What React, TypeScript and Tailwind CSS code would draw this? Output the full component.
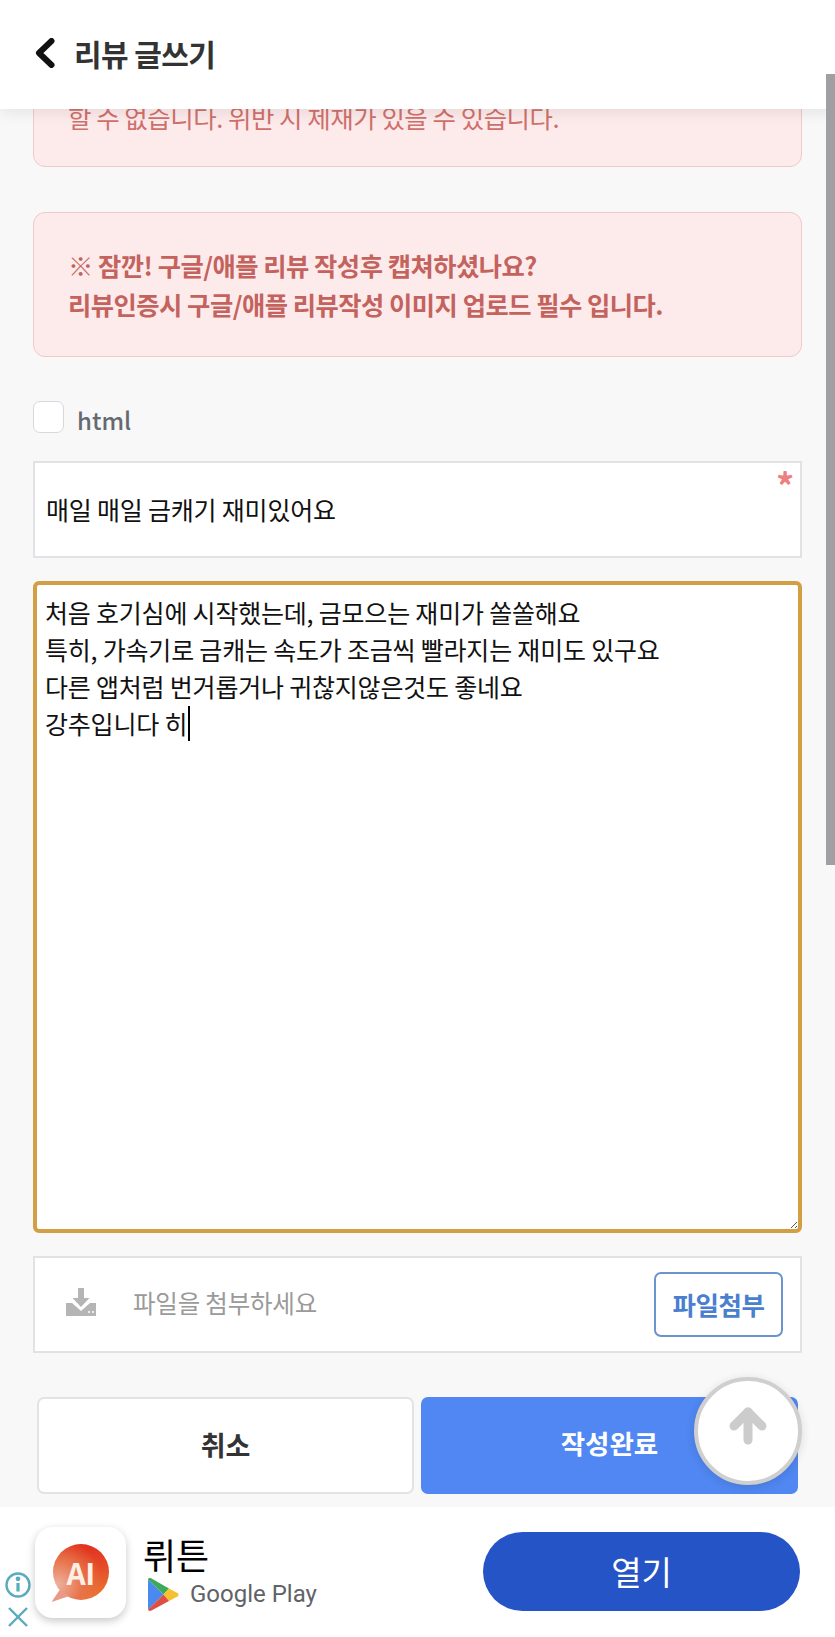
import { ArrowUp } from "lucide-react"

const font = "font-['Noto_Sans_CJK_KR','Noto_Sans',sans-serif]"

function Header() {
  return (
    <header className="absolute inset-x-0 top-0 z-20 flex h-[109px] items-center bg-white pl-[35px] pb-[3px] shadow-[0_4px_14px_rgba(0,0,0,0.08)]">
      <svg width="20" height="30" viewBox="0 0 20 30" fill="none" className="mr-[19px]">
        <polyline points="16.5,3 4,15 16.5,27" stroke="#111" strokeWidth="6" strokeLinecap="round" strokeLinejoin="round" />
      </svg>
      <h1 className="text-[30px] leading-none font-bold tracking-[-0.6px] text-[#333]">리뷰 글쓰기</h1>
    </header>
  )
}

function PlayLogo() {
  return (
    <svg width="31" height="33" viewBox="0 0 31 33">
      <path d="M0 1.5 L0 31.5 L15.5 16.5 Z" fill="#4a8af0" />
      <path d="M0 1.5 C0.5 0 2 -0.3 3.5 0.5 L21 10.5 L15.5 16.5 Z" fill="#3fa85c" />
      <path d="M21 10.5 L29.5 15 C31 16 31 17.5 29.5 18.5 L21 23 L15.5 16.5 Z" fill="#f4c22e" />
      <path d="M0 31.5 C0.5 33 2 33.3 3.5 32.5 L21 23 L15.5 16.5 Z" fill="#dc4f42" />
    </svg>
  )
}

function AdBar() {
  return (
    <aside className="absolute inset-x-0 bottom-0 z-10 flex h-[130px] items-center bg-white">
      <div className="absolute bottom-0 left-0 flex h-[68px] w-[35px] flex-col items-center bg-white pt-[3px]">
        <svg width="26" height="26" viewBox="0 0 26 26" fill="none" stroke="#5aabbd" strokeWidth="2.4">
          <circle cx="13" cy="13" r="11.5" />
          <line x1="13" y1="11" x2="13" y2="19.5" strokeWidth="3.2" />
          <circle cx="13" cy="6.8" r="1.2" fill="#5aabbd" />
        </svg>
        <svg width="22" height="22" viewBox="0 0 22 22" fill="none" stroke="#5aabbd" strokeWidth="2.4" className="mt-[8px]">
          <line x1="2" y1="2" x2="20" y2="20" />
          <line x1="20" y1="2" x2="2" y2="20" />
        </svg>
      </div>
      <div className="z-10 ml-[35px] flex h-[91px] w-[91px] items-center justify-center rounded-[18px] bg-white shadow-[0_3px_8px_rgba(0,0,0,0.22)]">
        <div className="relative flex h-[56px] w-[56px] items-center justify-center rounded-full bg-[radial-gradient(circle_at_8%_72%,#eeb09c,#e8734a_38%,rgba(232,90,40,0)_70%),linear-gradient(170deg,#e2331f_15%,#e5512a_55%,#ea7a2c_95%)]">
          <span className="absolute bottom-[-2px] left-[-1px] h-[12px] w-[18px] bg-[#e99a86] [clip-path:polygon(45%_0,100%_50%,0_100%)]" />
          <span className="relative text-[30px] leading-none font-bold tracking-[-0.5px] text-[#fdeee6]">AI</span>
        </div>
      </div>
      <div className="ml-[17px] flex flex-col">
        <div className="text-[36px] leading-[40px] text-black">뤼튼</div>
        <div className="mt-[4px] ml-[5px] flex items-center gap-[11px]">
          <PlayLogo />
          <span className="font-['Roboto',sans-serif] text-[24px] leading-none text-[#5f6368]">Google Play</span>
        </div>
      </div>
      <button className="absolute right-[35px] top-[25px] h-[79px] w-[317px] rounded-full bg-[#2554c7] text-[33px] text-white">열기</button>
    </aside>
  )
}

export default function App() {
  return (
    <div className={`relative h-[1637px] w-[835px] overflow-hidden bg-[#f8f8f9] ${font}`}>
      <Header />

      {/* scroll position */}
      <div className="absolute right-0 top-[74px] z-30 h-[791px] w-[9px] bg-[#a0a0a4]" />

      <main className="flex flex-col px-[33px] pt-[60px]">
        <section className="flex h-[107px] flex-col justify-end rounded-[12px] border border-[#f0c9c9] bg-[#fdebeb] pb-[30px] pl-[34px] text-[25.5px] leading-[39px] tracking-[-0.5px] text-[#d0706c]">
          할 수 없습니다. 위반 시 제재가 있을 수 있습니다.
        </section>

        <section className="mt-[45px] flex h-[145px] flex-col justify-center rounded-[12px] border border-[#f0c9c9] bg-[#fdebeb] pl-[34px] text-[25.3px] leading-[39px] font-bold tracking-[-0.5px] text-[#c4625e]">
          <p>※ 잠깐! 구글/애플 리뷰 작성후 캡쳐하셨나요?</p>
          <p>리뷰인증시 구글/애플 리뷰작성 이미지 업로드 필수 입니다.</p>
        </section>

        <label className="mt-[44px] flex h-[32px] items-center gap-[13px]">
          <span className="h-[32px] w-[31px] rounded-[7px] border border-[#d5d8de] bg-white" />
          <span className="mt-[5px] text-[24px] font-medium text-[#666a70]">html</span>
        </label>

        <div className="relative mt-[28px] flex h-[97px] items-center border-2 border-[#e0e2e6] bg-white pl-[11px] text-[25px] tracking-[-0.2px] text-[#111]">
          매일 매일 금캐기 재미있어요
          <span className="absolute right-[6px] top-[6px] text-[36px] leading-[30px] font-bold text-[#ee7f7f]">*</span>
        </div>

        <div className="relative mt-[23px] h-[652px] rounded-[6px] border-[4px] border-[#d29f45] bg-white pl-[8px] pt-[9px] text-[25px] leading-[37px] tracking-[-0.2px] text-[#111]">
          <p>처음 호기심에 시작했는데, 금모으는 재미가 쏠쏠해요</p>
          <p>특히, 가속기로 금캐는 속도가 조금씩 빨라지는 재미도 있구요</p>
          <p>다른 앱처럼 번거롭거나 귀찮지않은것도 좋네요</p>
          <p className="flex items-center">
            강추입니다 히<span className="ml-[1px] h-[35px] w-[2px] bg-black" />
          </p>
          <svg width="8" height="8" viewBox="0 0 8 8" className="absolute bottom-0 right-0" stroke="#555" strokeWidth="1">
            <line x1="1" y1="7" x2="7" y2="1" />
            <line x1="5" y1="7" x2="7" y2="5" />
          </svg>
        </div>

        <div className="relative mt-[23px] flex h-[97px] items-center border-2 border-[#e0e2e6] bg-white pl-[31px] pr-[17px]">
          <svg width="30" height="28" viewBox="0 0 30 28" fill="#b5b5b5" className="mb-[6px]">
            <path d="M12 0 H18 V10 H23.5 L15 19 L6.5 10 H12 Z" />
            <path d="M0 15 H6 L15 23 L24 15 H30 V28 H0 Z" />
            <circle cx="23" cy="24" r="1" fill="#fff" />
            <circle cx="27" cy="24" r="1" fill="#fff" />
          </svg>
          <span className="mb-[2px] ml-[37px] text-[24.5px] tracking-[-0.2px] text-[#9a9a9a]">파일을 첨부하세요</span>
          <button className="ml-auto h-[65px] w-[129px] rounded-[7px] border-2 border-[#6b94cf] text-[25.5px] font-bold tracking-[-0.5px] text-[#4a7fd0]">
            파일첨부
          </button>
        </div>

        <div className="mt-[44px] flex gap-[7px] px-[4px]">
          <button className="h-[97px] w-[377px] rounded-[7px] border-2 border-[#e3e3e5] bg-white text-[27px] font-bold text-[#333]">취소</button>
          <button className="h-[97px] w-[377px] rounded-[7px] bg-[#5087f2] pb-[6px] text-[26.5px] font-bold text-white">작성완료</button>
        </div>
      </main>

      <button className="absolute left-[694px] top-[1377px] z-10 flex h-[108px] w-[108px] items-center justify-center rounded-full border-[4px] border-[#cfcfcf] bg-white shadow-[0_2px_10px_rgba(0,0,0,0.12)]">
        <ArrowUp size={48} strokeWidth={4.5} color="#cccccc" absoluteStrokeWidth={false} className="mb-[10px]" />
      </button>

      <AdBar />
    </div>
  )
}
